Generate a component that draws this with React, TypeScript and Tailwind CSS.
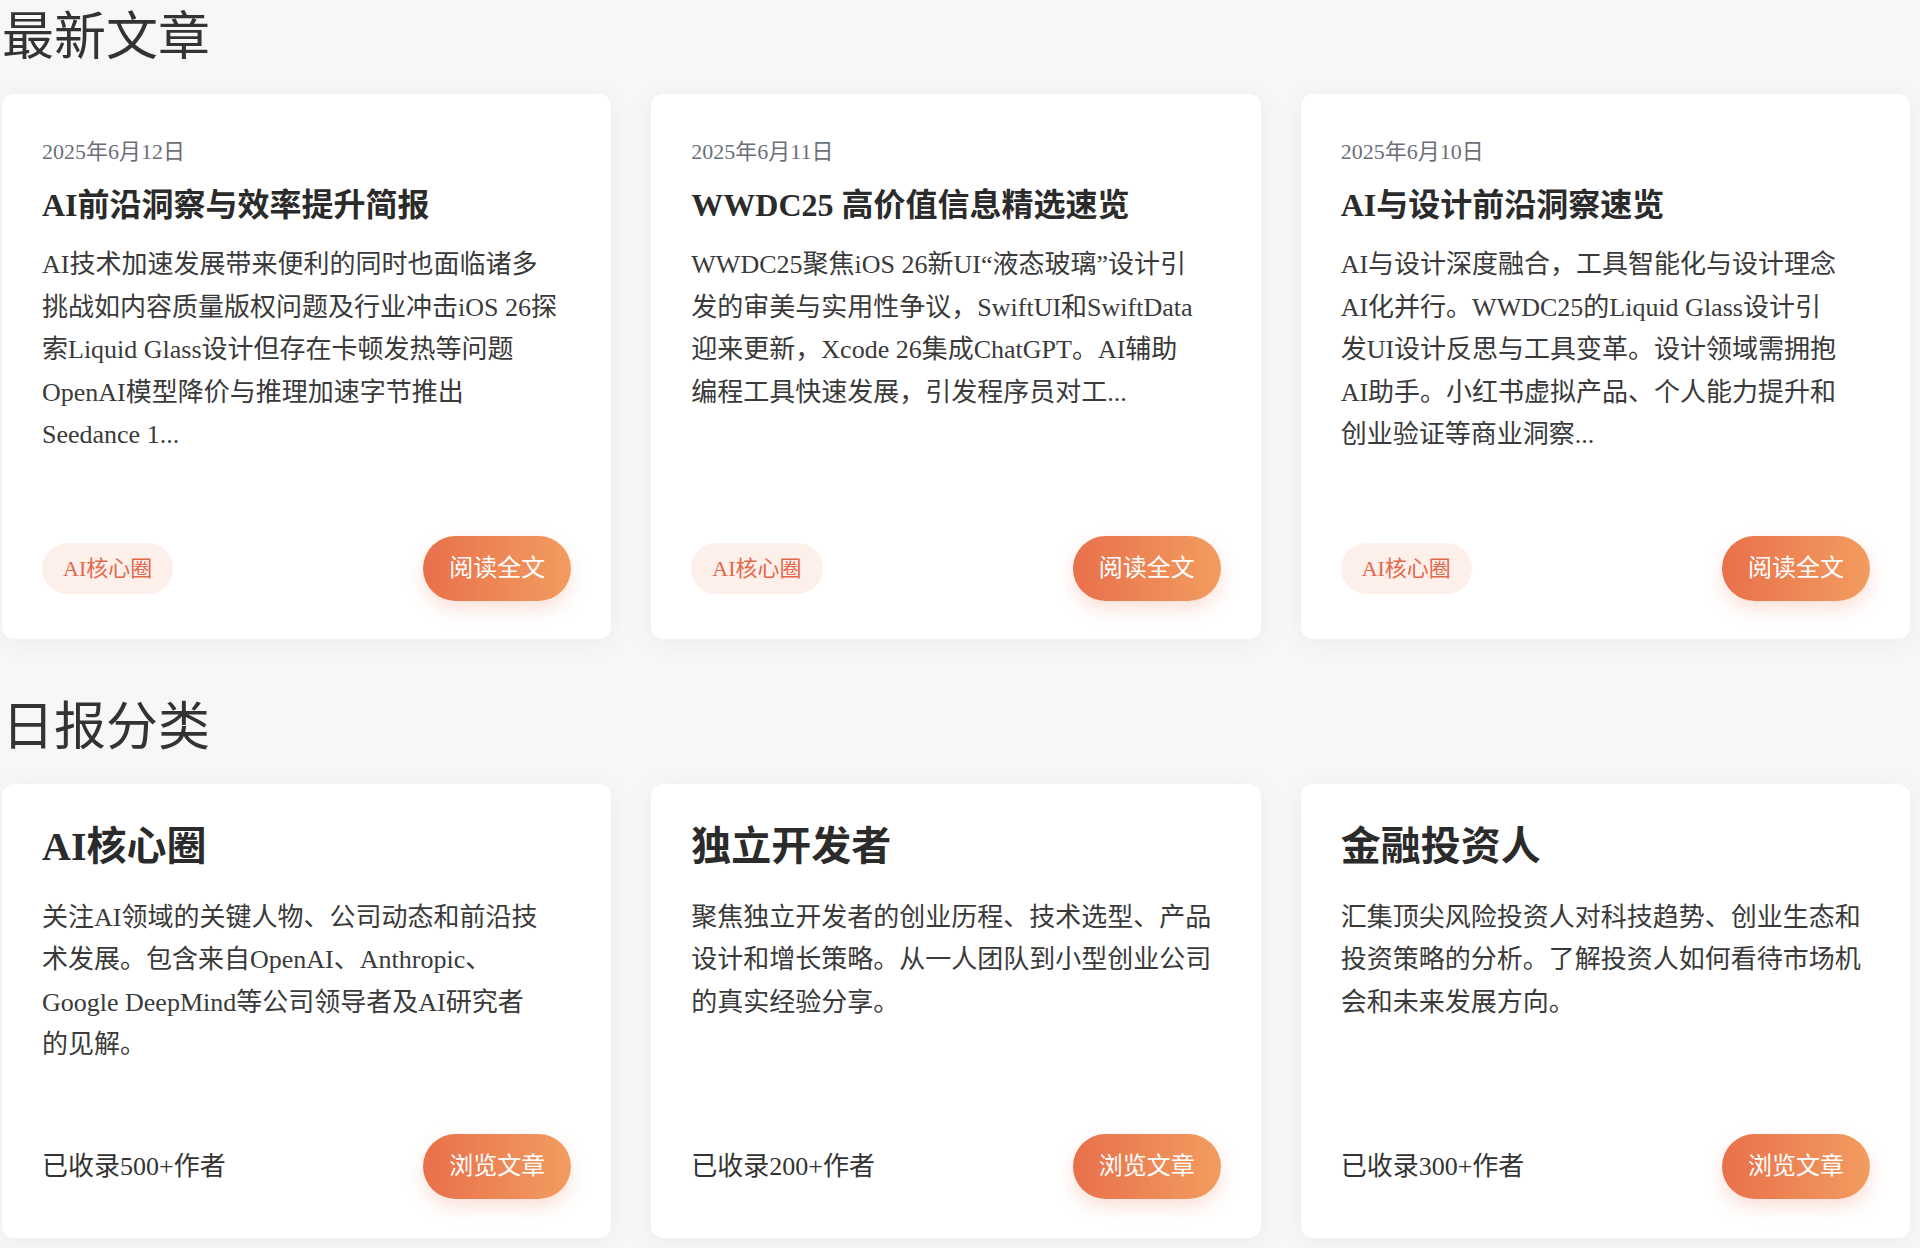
import React from "react";

type Post = {
  date: string;
  title: string;
  lines: string[];
  tag: string;
};

type Category = {
  name: string;
  lines: string[];
  count: string;
};

const posts: Post[] = [
  {
    date: "2025年6月12日",
    title: "AI前沿洞察与效率提升简报",
    lines: [
      "AI技术加速发展带来便利的同时也面临诸多",
      "挑战如内容质量版权问题及行业冲击iOS 26探",
      "索Liquid Glass设计但存在卡顿发热等问题",
      "OpenAI模型降价与推理加速字节推出",
      "Seedance 1...",
    ],
    tag: "AI核心圈",
  },
  {
    date: "2025年6月11日",
    title: "WWDC25 高价值信息精选速览",
    lines: [
      "WWDC25聚焦iOS 26新UI“液态玻璃”设计引",
      "发的审美与实用性争议，SwiftUI和SwiftData",
      "迎来更新，Xcode 26集成ChatGPT。AI辅助",
      "编程工具快速发展，引发程序员对工...",
    ],
    tag: "AI核心圈",
  },
  {
    date: "2025年6月10日",
    title: "AI与设计前沿洞察速览",
    lines: [
      "AI与设计深度融合，工具智能化与设计理念",
      "AI化并行。WWDC25的Liquid Glass设计引",
      "发UI设计反思与工具变革。设计领域需拥抱",
      "AI助手。小红书虚拟产品、个人能力提升和",
      "创业验证等商业洞察...",
    ],
    tag: "AI核心圈",
  },
];

const categories: Category[] = [
  {
    name: "AI核心圈",
    lines: [
      "关注AI领域的关键人物、公司动态和前沿技",
      "术发展。包含来自OpenAI、Anthropic、",
      "Google DeepMind等公司领导者及AI研究者",
      "的见解。",
    ],
    count: "已收录500+作者",
  },
  {
    name: "独立开发者",
    lines: [
      "聚焦独立开发者的创业历程、技术选型、产品",
      "设计和增长策略。从一人团队到小型创业公司",
      "的真实经验分享。",
    ],
    count: "已收录200+作者",
  },
  {
    name: "金融投资人",
    lines: [
      "汇集顶尖风险投资人对科技趋势、创业生态和",
      "投资策略的分析。了解投资人如何看待市场机",
      "会和未来发展方向。",
    ],
    count: "已收录300+作者",
  },
];

function Lines({ lines }: { lines: string[] }) {
  return (
    <p className="text-[26px] leading-[42.5px] text-[#3a3a3a]">
      {lines.map((line, i) => (
        <React.Fragment key={i}>
          {line}
          {i < lines.length - 1 && <br />}
        </React.Fragment>
      ))}
    </p>
  );
}

function OrangeButton({ children }: { children: React.ReactNode }) {
  return (
    <button className="h-[65px] px-[26px] rounded-full bg-linear-to-r from-[#e8704b] to-[#f29c60] text-white text-[24px] leading-none shadow-[0_8px_18px_rgba(232,112,75,0.22)]">
      {children}
    </button>
  );
}

function PostCard({ post }: { post: Post }) {
  return (
    <article className="flex flex-col bg-white rounded-xl px-10 pt-10 pb-[38px] shadow-[0_4px_24px_rgba(0,0,0,0.05)]">
      <div className="text-[22px] leading-[36px] text-[#6b7078]">{post.date}</div>
      <h3 className="mt-[13px] mb-[17px] text-[32px] leading-[44px] font-bold text-[#2b2b2b]">
        {post.title}
      </h3>
      <Lines lines={post.lines} />
      <div className="mt-auto pt-[79px] flex items-center justify-between">
        <span className="h-[51px] px-[21px] flex items-center rounded-full bg-[#fdefea] text-[#e2694b] text-[22px]">
          {post.tag}
        </span>
        <OrangeButton>阅读全文</OrangeButton>
      </div>
    </article>
  );
}

function CategoryCard({ cat }: { cat: Category }) {
  return (
    <article className="flex flex-col bg-white rounded-xl px-10 pt-10 pb-[39px] shadow-[0_4px_24px_rgba(0,0,0,0.05)]">
      <h3 className="mb-[27px] text-[40px] leading-[46px] font-semibold text-[#2b2b2b]">{cat.name}</h3>
      <Lines lines={cat.lines} />
      <div className="mt-auto pt-[67px] flex items-center justify-between">
        <span className="text-[26px] text-[#333]">{cat.count}</span>
        <OrangeButton>浏览文章</OrangeButton>
      </div>
    </article>
  );
}

export default function App() {
  return (
    <div className="min-h-screen bg-[#f7f7f8] pl-[2px] pr-[10px] font-['Liberation_Serif','Noto_Sans_CJK_SC',serif]">
      <section className="pt-[7px]">
        <h2 className="mb-[25px] text-[52px] leading-[62px] text-[#333]">最新文章</h2>
        <div className="grid grid-cols-3 gap-10">
          {posts.map((p) => (
            <PostCard key={p.date} post={p} />
          ))}
        </div>
      </section>
      <section className="mt-[58px]">
        <h2 className="mb-[25px] text-[52px] leading-[62px] text-[#333]">日报分类</h2>
        <div className="grid grid-cols-3 gap-10">
          {categories.map((c) => (
            <CategoryCard key={c.name} cat={c} />
          ))}
        </div>
      </section>
    </div>
  );
}
